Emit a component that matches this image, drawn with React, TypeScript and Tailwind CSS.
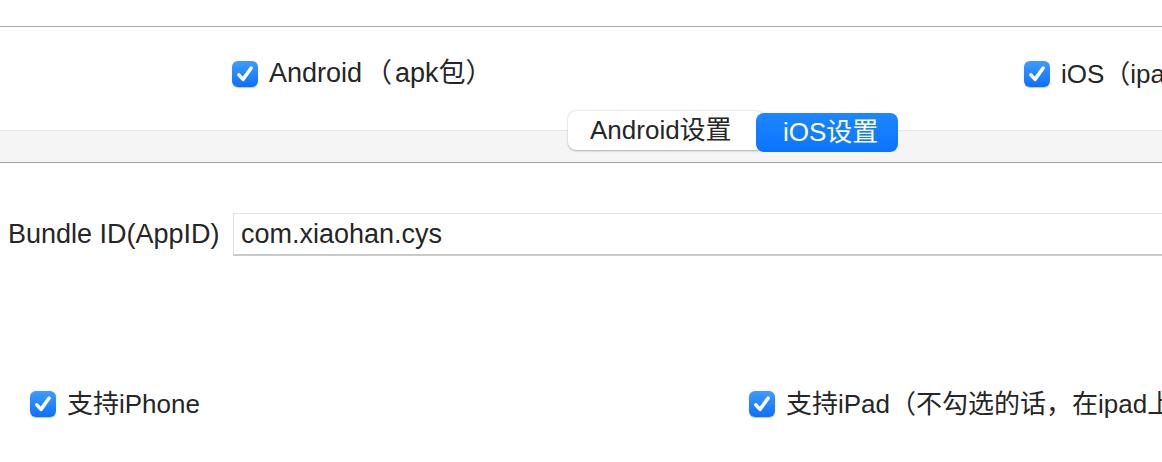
import React from "react";

const font = { fontFamily: '"Liberation Sans", "Noto Sans CJK SC", sans-serif' };

function Check() {
  return (
    <div className="w-[26px] h-[26px] shrink-0 rounded-[6px] bg-gradient-to-b from-[#3d9bff] to-[#0a6fff] flex items-center justify-center shadow-[0_0.5px_1px_rgba(0,0,0,0.25)]">
      <svg width="22" height="22" viewBox="0 0 20 20" fill="none">
        <path d="M4.4 10.8 L8.2 14.9 L15.6 4.6" stroke="white" strokeWidth="3.2" strokeLinecap="round" strokeLinejoin="round" />
      </svg>
    </div>
  );
}

function CheckItem({ children, size = "text-[27px]" }: { children: React.ReactNode; size?: string }) {
  return (
    <div className="flex items-center gap-[11px] whitespace-nowrap">
      <Check />
      <span className={`${size} leading-none text-[#262626]`}>{children}</span>
    </div>
  );
}

export default function App() {
  return (
    <div className="w-[1162px] h-[462px] bg-white overflow-hidden" style={font}>
      <div className="h-[26px]" />
      <div className="h-px bg-[#a9a9a9]" />
      <div className="flex pt-[33px] pl-[232px]">
        <div className="w-[792px] shrink-0">
          <CheckItem>
            Android<span className="mx-[3px]">（</span>apk包）
          </CheckItem>
        </div>
        <CheckItem size="text-[26px]">iOS（ipa包）</CheckItem>
      </div>
      <div className="relative mt-[43px]">
        <div className="h-[33px] bg-[#f5f5f5] border-t border-[#e6e6e6] border-b border-b-[#a3a3a3]" />
        <div className="absolute left-[568px] top-[-19px] flex items-start">
          <div className="w-[196px] h-[39px] bg-white rounded-[8px] shadow-[0_0.5px_2px_rgba(0,0,0,0.3)] flex items-center pl-[22px] text-[26px] text-[#262626] whitespace-nowrap">
            Android设置
          </div>
          <div className="-ml-[8px] mt-[2px] w-[142px] h-[39px] rounded-[8px] bg-gradient-to-b from-[#1d86ff] to-[#0a74ff] flex items-center pl-[27px] text-[26px] text-white whitespace-nowrap">
            iOS设置
          </div>
        </div>
      </div>
      <div className="flex items-center mt-[50px]">
        <div className="w-[233px] shrink-0 pl-[8px] text-[27px] text-[#262626] whitespace-nowrap">Bundle ID(AppID)</div>
        <div className="flex-1 h-[43px] border-t border-[#e4e4e4] border-l border-l-[#e4e4e4] border-b-2 border-b-[#cacaca] flex items-center pl-[7px] text-[27px] text-[#262626] -mr-[10px]">
          com.xiaohan.cys
        </div>
      </div>
      <div className="flex mt-[135px] pl-[30px]">
        <div className="w-[719px] shrink-0">
          <CheckItem size="text-[26px]">支持iPhone</CheckItem>
        </div>
        <CheckItem size="text-[26px]">支持iPad（不勾选的话，在ipad上显示为放大的iPhone版）</CheckItem>
      </div>
    </div>
  );
}
